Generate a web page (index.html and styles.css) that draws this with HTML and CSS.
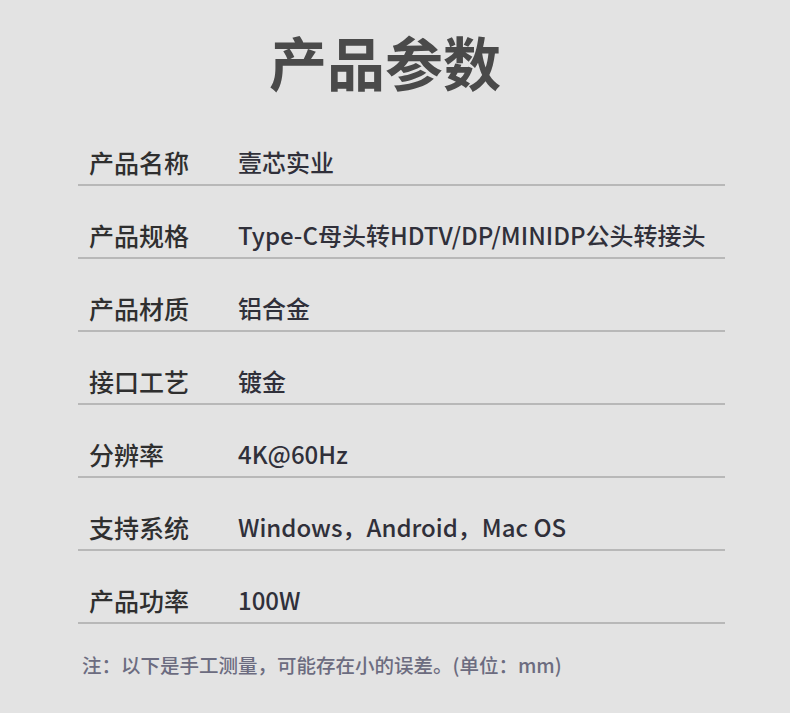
FILE: index.html
```html
<!DOCTYPE html>
<html lang="zh-CN">
<head>
<meta charset="utf-8">
<title>产品参数</title>
<link rel="stylesheet" href="styles.css">
</head>
<body>
<main class="page">
  <h1 class="title">产品参数</h1>
  <div class="spec">
    <div class="row"><span class="label">产品名称</span><span class="value">壹芯实业</span></div>
    <div class="row"><span class="label">产品规格</span><span class="value">Type-C母头转HDTV/DP/MINIDP公头转接头</span></div>
    <div class="row"><span class="label">产品材质</span><span class="value">铝合金</span></div>
    <div class="row"><span class="label">接口工艺</span><span class="value">镀金</span></div>
    <div class="row"><span class="label">分辨率</span><span class="value">4K@60Hz</span></div>
    <div class="row"><span class="label">支持系统</span><span class="value">Windows，Android，Mac OS</span></div>
    <div class="row"><span class="label">产品功率</span><span class="value">100W</span></div>
  </div>
  <p class="note">注：以下是手工测量，可能存在小的误差。(单位：mm)</p>
</main>
</body>
</html>
```

FILE: styles.css
```css
html, body {
  margin: 0;
  padding: 0;
  background: #e3e3e3;
}
body {
  font-family: "Noto Sans CJK SC", "Noto Sans", sans-serif;
  width: 790px;
  height: 713px;
  overflow: hidden;
}
.page {
  display: flex;
  flex-direction: column;
}
.title {
  margin: 0;
  padding: 25px 20px 16px 0;
  height: 72px;
  line-height: 72px;
  font-size: 58px;
  font-weight: 700;
  color: #4a4a4a;
  text-align: center;
  letter-spacing: 0;
}
.spec {
  margin: 0 65px 0 78px;
  display: flex;
  flex-direction: column;
}
.row {
  display: flex;
  align-items: center;
  padding: 31px 0 4px 11px;
  height: 36px;
  line-height: 36px;
  border-bottom: 2px solid #b8b8b8;
}
.label {
  width: 149px;
  flex: none;
  font-size: 25px;
  font-weight: 500;
  color: #2f2f2f;
}
.value {
  font-size: 24px;
  font-weight: 500;
  color: #30303a;
  white-space: nowrap;
}
.note {
  margin: 26px 0 0 82px;
  line-height: 30px;
  font-size: 19.5px;
  font-weight: 500;
  color: #6c6c80;
}
```
